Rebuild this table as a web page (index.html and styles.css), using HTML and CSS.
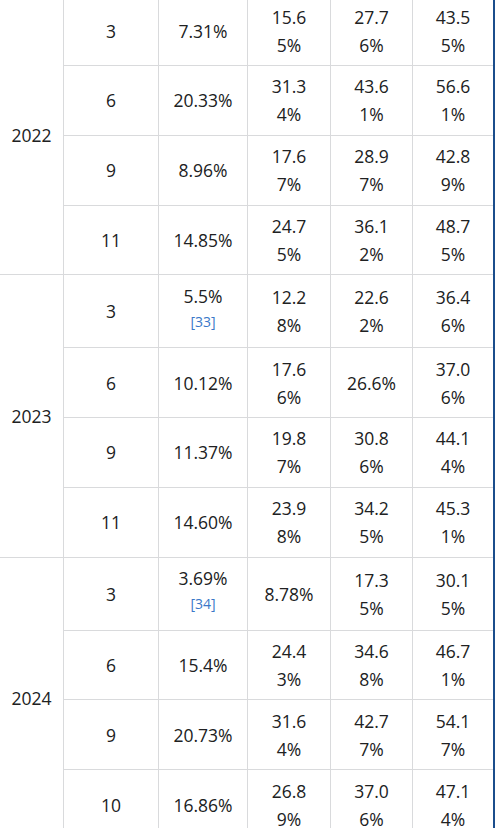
FILE: index.html
```html
<!DOCTYPE html>
<html lang="zh">
<head>
<meta charset="utf-8">
<title>Table</title>
<link rel="stylesheet" href="styles.css">
</head>
<body>
<div class="viewport">
<table class="data">
<colgroup>
<col class="c-year"><col class="c-month"><col class="c-a"><col class="c-b"><col class="c-c"><col class="c-d">
</colgroup>
<tbody>
<tr>
<td class="year" rowspan="4">2022</td>
<td>3</td><td>7.31%</td><td>15.6<br>5%</td><td>27.7<br>6%</td><td class="last">43.5<br>5%</td>
</tr>
<tr><td>6</td><td>20.33%</td><td>31.3<br>4%</td><td>43.6<br>1%</td><td class="last">56.6<br>1%</td></tr>
<tr><td>9</td><td>8.96%</td><td>17.6<br>7%</td><td>28.9<br>7%</td><td class="last">42.8<br>9%</td></tr>
<tr><td>11</td><td>14.85%</td><td>24.7<br>5%</td><td>36.1<br>2%</td><td class="last">48.7<br>5%</td></tr>

<tr class="ref-row">
<td class="year" rowspan="4">2023</td>
<td>3</td><td>5.5%<sup class="ref"><a href="#cite-33">[33]</a></sup></td><td>12.2<br>8%</td><td>22.6<br>2%</td><td class="last">36.4<br>6%</td>
</tr>
<tr><td>6</td><td>10.12%</td><td>17.6<br>6%</td><td>26.6%</td><td class="last">37.0<br>6%</td></tr>
<tr><td>9</td><td>11.37%</td><td>19.8<br>7%</td><td>30.8<br>6%</td><td class="last">44.1<br>4%</td></tr>
<tr><td>11</td><td>14.60%</td><td>23.9<br>8%</td><td>34.2<br>5%</td><td class="last">45.3<br>1%</td></tr>

<tr class="ref-row">
<td class="year" rowspan="4">2024</td>
<td>3</td><td>3.69%<sup class="ref"><a href="#cite-34">[34]</a></sup></td><td>8.78%</td><td>17.3<br>5%</td><td class="last">30.1<br>5%</td>
</tr>
<tr><td>6</td><td>15.4%</td><td>24.4<br>3%</td><td>34.6<br>8%</td><td class="last">46.7<br>1%</td></tr>
<tr><td>9</td><td>20.73%</td><td>31.6<br>4%</td><td>42.7<br>7%</td><td class="last">54.1<br>7%</td></tr>
<tr><td>10</td><td>16.86%</td><td>26.8<br>9%</td><td>37.0<br>6%</td><td class="last">47.1<br>4%</td></tr>
</tbody>
</table>
</div>
</body>
</html>
```

FILE: styles.css
```css
html, body {
  margin: 0;
  padding: 0;
  background: #ffffff;
}

.viewport {
  box-sizing: border-box;
  width: 495px;
  height: 100vh;
  overflow: hidden;
  border-right: 2px solid #1b4d8c;
}

.data {
  table-layout: fixed;
  width: 493px;
  border-collapse: separate;
  border-spacing: 0;
  margin-top: -3.8px;
  font-family: "Open Sans", "Noto Sans", sans-serif;
  font-size: 17.5px;
  line-height: 28px;
  color: #202122;
}

.c-year { width: 64px; }
.c-month { width: 95px; }
.c-a { width: 89px; }
.c-b { width: 83px; }
.c-c { width: 82px; }
.c-d { width: 80px; }

.data td {
  box-sizing: border-box;
  padding: 6.4px 4px;
  text-align: center;
  vertical-align: middle;
  border-right: 1px solid #d9dadc;
  border-bottom: 1px solid #d9dadc;
}

.data td.last {
  border-right: none;
}

.ref {
  display: block;
  font-size: 14px;
  line-height: 24px;
  height: 31.2px;
  vertical-align: baseline;
}

.ref a {
  color: #3a78c8;
  text-decoration: none;
}
```
